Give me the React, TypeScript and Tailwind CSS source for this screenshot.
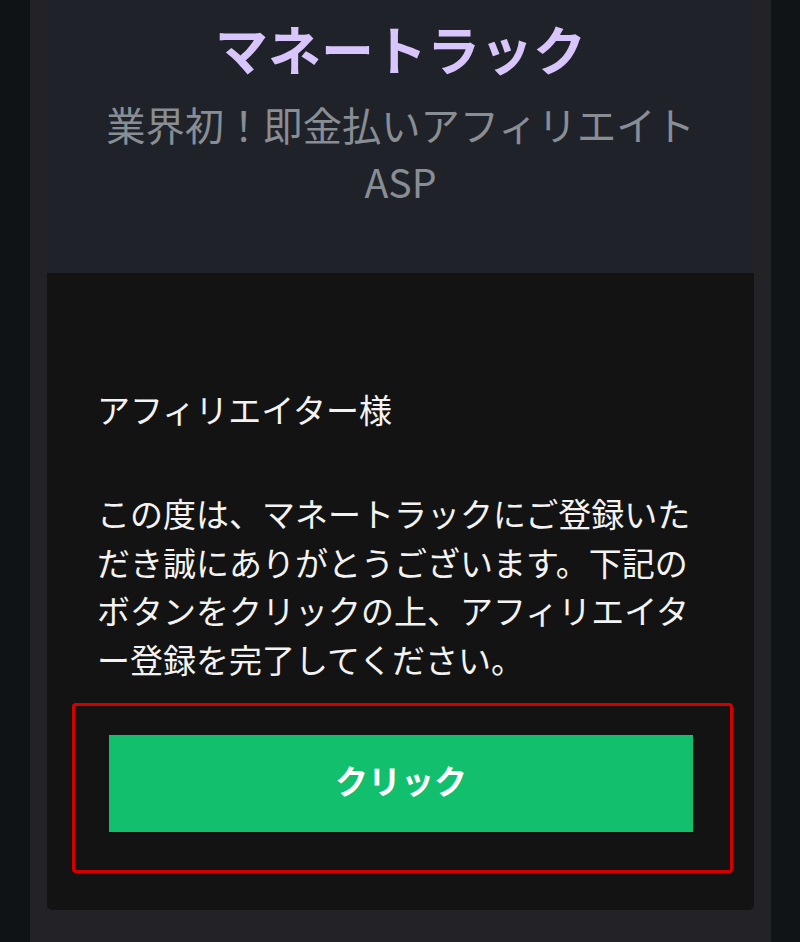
import React from "react";

export default function App() {
  return (
    <div
      className="flex w-[800px] h-[942px] overflow-hidden bg-[#0f1316]"
      style={{ fontFamily: '"Noto Sans CJK JP", "Noto Sans", sans-serif' }}
    >
      <div className="w-[30px] shrink-0 bg-[#0f1316]" />
      <div className="w-[741px] shrink-0 bg-[#232327] px-[17px] flex flex-col">
        <div className="h-[273px] bg-[#1f2329] flex flex-col items-center pt-[18px]">
          <h1 className="text-[53px] leading-[60px] font-bold text-[#d8c5fb] tracking-[0px]">
            マネートラック
          </h1>
          <p className="mt-[17px] text-[39.3px] leading-[57px] text-[#898d94] text-center">
            業界初！即金払いアフィリエイト
            <br />
            ASP
          </p>
        </div>
        <div className="h-[637px] bg-[#131313] rounded-b-[5px] pt-[112px] pb-[37px] flex flex-col">
          <div className="px-[50px] text-[33px] leading-[48.4px] text-[#f3f3f3]">
            <p>アフィリエイター様</p>
            <p className="mt-[56px]">
              この度は、マネートラックにご登録いた
              <br />
              だき誠にありがとうございます。下記の
              <br />
              ボタンをクリックの上、アフィリエイタ
              <br />
              ー登録を完了してください。
            </p>
          </div>
          <div className="ml-[25px] mr-[21px] mt-[20px] border-[3px] border-[#d40000] rounded-[4px] pl-[34px] pr-[37px] pt-[29px] pb-[38px]">
            <button className="w-full h-[97px] bg-[#11bf6d] text-white text-[33px] font-bold flex items-center justify-center pb-[5px]">
              クリック
            </button>
          </div>
        </div>
        <div className="flex-1" />
      </div>
      <div className="flex-1 bg-[#111416]" />
    </div>
  );
}
